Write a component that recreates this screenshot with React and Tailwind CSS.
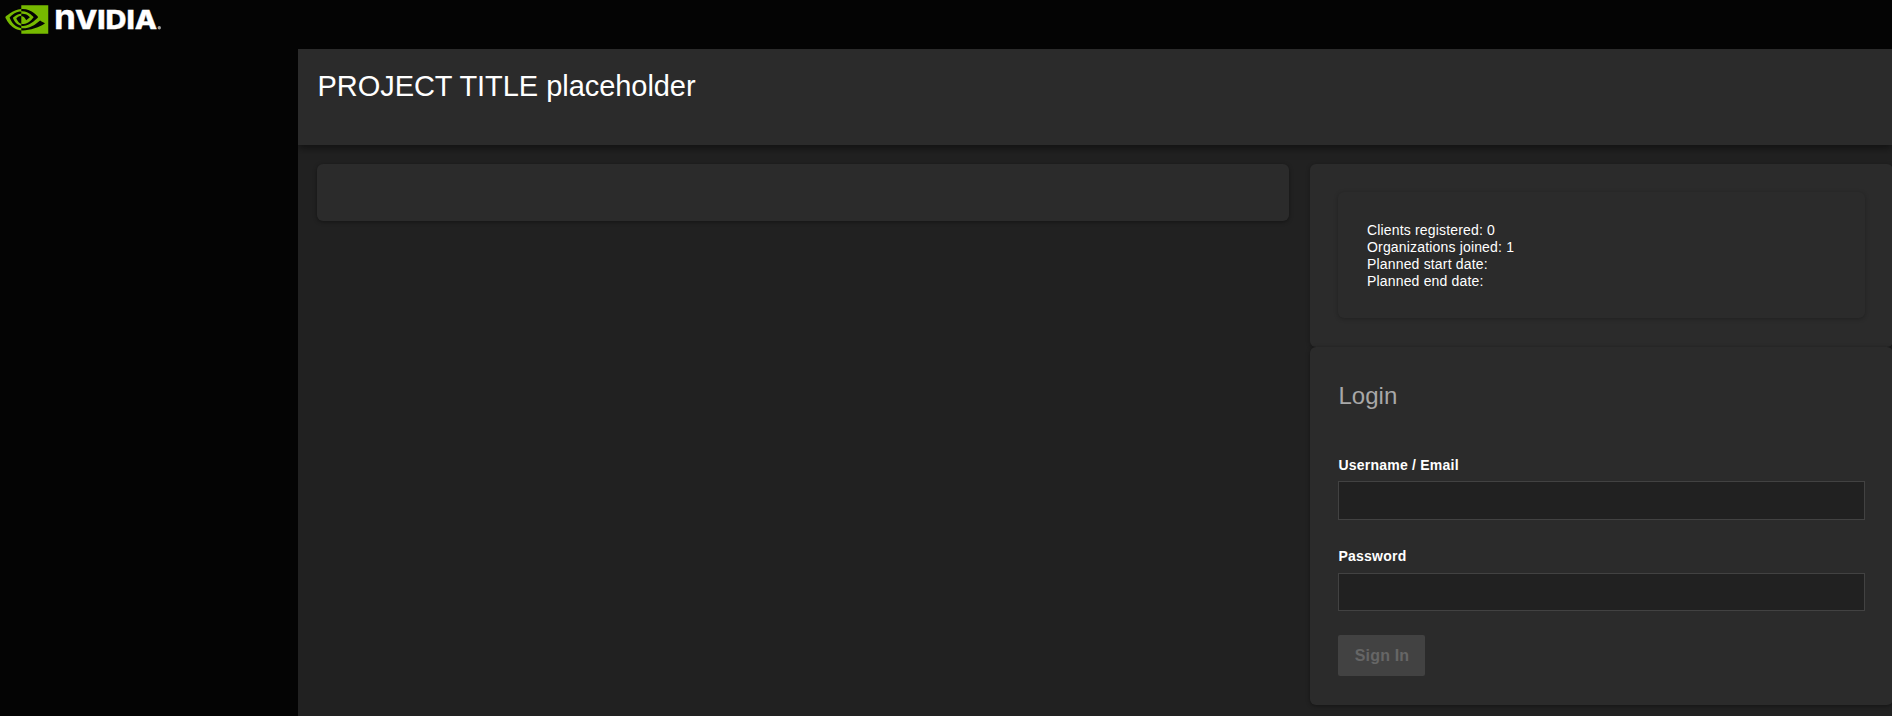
import { SiNvidia } from "react-icons/si";

function Logo() {
  return (
    <div className="flex h-[39px] items-center pl-[5px]">
      <SiNvidia className="h-[43px] w-[43.5px] shrink-0 text-[#76b900]" />
      <svg className="ml-[5.5px] h-[39px] w-[112px] overflow-visible" viewBox="0 0 112 39" aria-label="NVIDIA" fill="#fff" stroke="#fff" fontFamily="Inter, sans-serif">
        <text x="0" y="29" strokeWidth="0.3" fontSize="34" fontWeight="700" textLength="22" lengthAdjust="spacingAndGlyphs">n</text>
        <text x="21" y="29" strokeWidth="0.4" fontSize="26" fontWeight="800" textLength="82" lengthAdjust="spacingAndGlyphs">VIDIA</text>
        <circle cx="105.3" cy="27.8" r="1.7" fill="#a0a0a0" stroke="none" />
      </svg>
    </div>
  );
}

function Card({ className = "", children }) {
  return (
    <section className={`rounded-[6px] bg-[#2b2b2b] ${className}`}>
      {children}
    </section>
  );
}

function Field({ label, type, className = "", inputClass = "" }) {
  return (
    <label className={`block text-[14px] leading-[17px] font-bold tracking-[0.22px] text-white ${className}`}>
      <span className="pl-[0.5px]">{label}</span>
      <input type={type} className={`block w-full border border-[#424242] bg-[#212121] px-3 outline-none ${inputClass}`} />
    </label>
  );
}

export default function App() {
  return (
    <div className="flex h-[716px] w-full flex-col overflow-hidden bg-[#040404] font-['Liberation_Sans',Arial,sans-serif]">
      <header className="h-[49px] shrink-0">
        <Logo />
      </header>
      <div className="flex min-h-0 flex-1 pl-[298px]">
        <main className="flex min-w-0 flex-1 flex-col overflow-hidden bg-[#212121]">
          <div className="h-24 shrink-0 bg-[#2b2b2b] px-[19px] pt-[19px] shadow-[0_3px_8px_rgba(0,0,0,0.5)]">
            <h1 className="pl-[0.5px] text-[29px] leading-[36px] tracking-[-0.05px] text-white">PROJECT TITLE placeholder</h1>
          </div>
          <div className="flex items-start gap-[21px] pt-[19px] pl-[19px]">
            <Card className="h-[57px] w-[972px] shrink-0 shadow-[0_1px_4px_rgba(0,0,0,0.4)]" />
            <div className="w-[583px] shrink-0">
              <Card className="h-[183px] px-7 pt-7 shadow-[0_1px_4px_rgba(0,0,0,0.3)]">
                <Card className="h-[126px] px-[29px] pt-[30px] text-[14px] leading-[17px] tracking-[0.17px] text-white shadow-[0_1px_4px_rgba(0,0,0,0.25)]">
                  <p>Clients registered: 0</p>
                  <p>Organizations joined: 1</p>
                  <p>Planned start date:</p>
                  <p>Planned end date:</p>
                </Card>
              </Card>
              <Card className="h-[358px] px-7 pt-[35px] shadow-[0_1px_4px_rgba(0,0,0,0.4)]">
                <h2 className="pl-[0.5px] text-[24px] leading-[28px] text-[#a8a8a8]">Login</h2>
                <form className="pt-[47px]">
                  <Field label="Username / Email" type="text" inputClass="mt-[7px] h-[39px]" />
                  <Field label="Password" type="password" className="mt-[28px]" inputClass="mt-[8px] h-[38px]" />
                  <button type="button" disabled className="mt-6 block h-[41px] w-[87px] rounded-[2px] bg-[#424242] pl-[1px] text-[16px] font-bold tracking-[0.15px] text-[#666]">Sign In</button>
                </form>
              </Card>
            </div>
          </div>
        </main>
      </div>
    </div>
  );
}
